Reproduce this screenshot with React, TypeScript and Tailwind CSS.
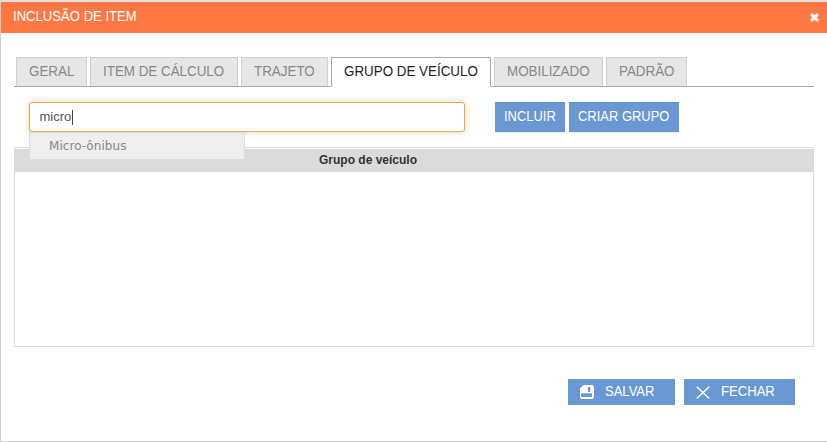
import type { ReactNode } from 'react';

const tabs = [
  { label: 'GERAL', width: 'w-[71px]' },
  { label: 'ITEM DE CÁLCULO', width: 'w-[148px]' },
  { label: 'TRAJETO', width: 'w-[87px]' },
  { label: 'GRUPO DE VEÍCULO', width: 'w-[160px]', active: true },
  { label: 'MOBILIZADO', width: 'w-[109px]' },
  { label: 'PADRÃO', width: 'w-[81px]' },
];

function ActionButton({ className, children }: { className: string; children: ReactNode }) {
  return (
    <button
      className={`flex h-[30px] items-start border-t border-[#6294d4] bg-[#6a98d3] pt-[3px] pl-[9px] text-[14px] leading-[20px] whitespace-nowrap text-white shadow-[0_1px_1px_rgba(0,0,0,0.06)] ${className}`}
    >
      <span className="origin-left scale-x-[0.925]">{children}</span>
    </button>
  );
}

function SaveIcon() {
  return (
    <svg className="mt-[6px] h-[14px] w-[14px]" viewBox="0 0 14 14" shapeRendering="crispEdges">
      <path d="M3 0H13V1H14V13H13V14H1V13H0V3H1V2H2V1H3Z" fill="#fff" />
      <path d="M1 8H12V12H1Z" fill="#6a98d3" />
      <path d="M1 8H12V9H1Z" fill="#8fb2e0" />
      <path d="M8 2H10V7H8Z" fill="#6a98d3" />
      <path d="M10 2H11V7H10Z" fill="#dbe6f5" />
    </svg>
  );
}

function CancelIcon() {
  return (
    <svg className="mt-[7px] h-[14px] w-[14px]" viewBox="0 0 14 14" fill="none" stroke="#fff" strokeWidth="1.4">
      <path d="M0.7 0.7L13.3 12.6M13.3 0.7L0.7 12.6" />
    </svg>
  );
}

export default function App() {
  return (
    <div className="flex h-[442px] w-[827px] flex-col overflow-hidden border-b border-l border-[#d0d0d0] bg-white font-['Liberation_Sans',Arial,sans-serif]">
      <div className="h-[2px] shrink-0 bg-[#dedede]" />
      <header className="flex h-[31px] shrink-0 items-start justify-between bg-[#ff7843] pt-[4px] pr-[8px] pl-[12px] text-white">
        <h1 className="origin-left scale-x-[0.936] text-[14px] leading-[20px]">INCLUSÃO DE ITEM</h1>
        <button aria-label="Fechar" className="mt-[7px]">
          <svg className="h-[9px] w-[9px]" viewBox="0 0 9 9" stroke="#fff" strokeWidth="3">
            <path d="M1.1 1.1L7.9 7.9M7.9 1.1L1.1 7.9" />
          </svg>
        </button>
      </header>

      <nav className="mt-[24px] mr-[13px] ml-[13px] flex h-[30px] shrink-0 gap-[3px] border-b border-[#aaa] pl-[2px]">
        {tabs.map((tab) => (
          <button
            key={tab.label}
            className={`flex shrink-0 items-start border pt-[3px] pl-[12.4px] text-[14px] leading-[20px] whitespace-nowrap ${tab.width} ${
              tab.active
                ? 'h-[30px] border-[#aaa] border-b-white bg-white text-[#222]'
                : 'h-[29px] border-[#d0d0d0] border-b-0 bg-[#e6e6e6] text-[#888]'
            }`}
          >
            <span className="origin-left scale-x-[0.956]">{tab.label}</span>
          </button>
        ))}
      </nav>

      <div className="mt-[15px] ml-[28px] flex h-[30px] shrink-0">
        <div className="relative w-[436px]">
          <div className="flex h-[30px] items-center rounded-[3px] border border-[#e9a456] bg-white pl-[9.5px] text-[13px] text-[#555] shadow-[0_0_6px_rgba(240,180,80,0.5)]">
            <span>micro</span>
            <span className="ml-[0.5px] h-[15px] w-px bg-[#444]" />
          </div>
          <div className="absolute top-[30px] left-0 z-10 h-[28px] w-[216px] border border-[#dedede] bg-[#eee] pt-[4px] pl-[19px] font-['DejaVu_Sans',Verdana,sans-serif] text-[12px] leading-[18px] tracking-[0.05px] text-[#888]">
            Micro-ônibus
          </div>
        </div>
        <ActionButton className="ml-[30px] w-[70px]">INCLUIR</ActionButton>
        <ActionButton className="ml-[4px] w-[110px]">CRIAR GRUPO</ActionButton>
      </div>

      <section className="mt-[15px] ml-[13px] h-[200px] w-[800px] shrink-0 border border-[#dcdcdc] pt-px">
        <div className="h-[23px] bg-[#dbdbdb] pl-[304px] text-[12px] leading-[22px] font-bold text-[#333]">
          Grupo de veículo
        </div>
      </section>

      <footer className="mt-[32px] flex pl-[567px] text-[14px] leading-[20px] text-white">
        <button className="flex h-[26px] w-[107px] items-start bg-[#6a98d3] pl-[12px]">
          <SaveIcon />
          <span className="mt-[2px] ml-[11px] origin-left scale-x-[0.93]">SALVAR</span>
        </button>
        <button className="ml-[9px] flex h-[26px] w-[111px] items-start bg-[#6a98d3] pl-[12px]">
          <CancelIcon />
          <span className="mt-[2px] ml-[11px] origin-left scale-x-[0.935]">FECHAR</span>
        </button>
      </footer>
    </div>
  );
}
